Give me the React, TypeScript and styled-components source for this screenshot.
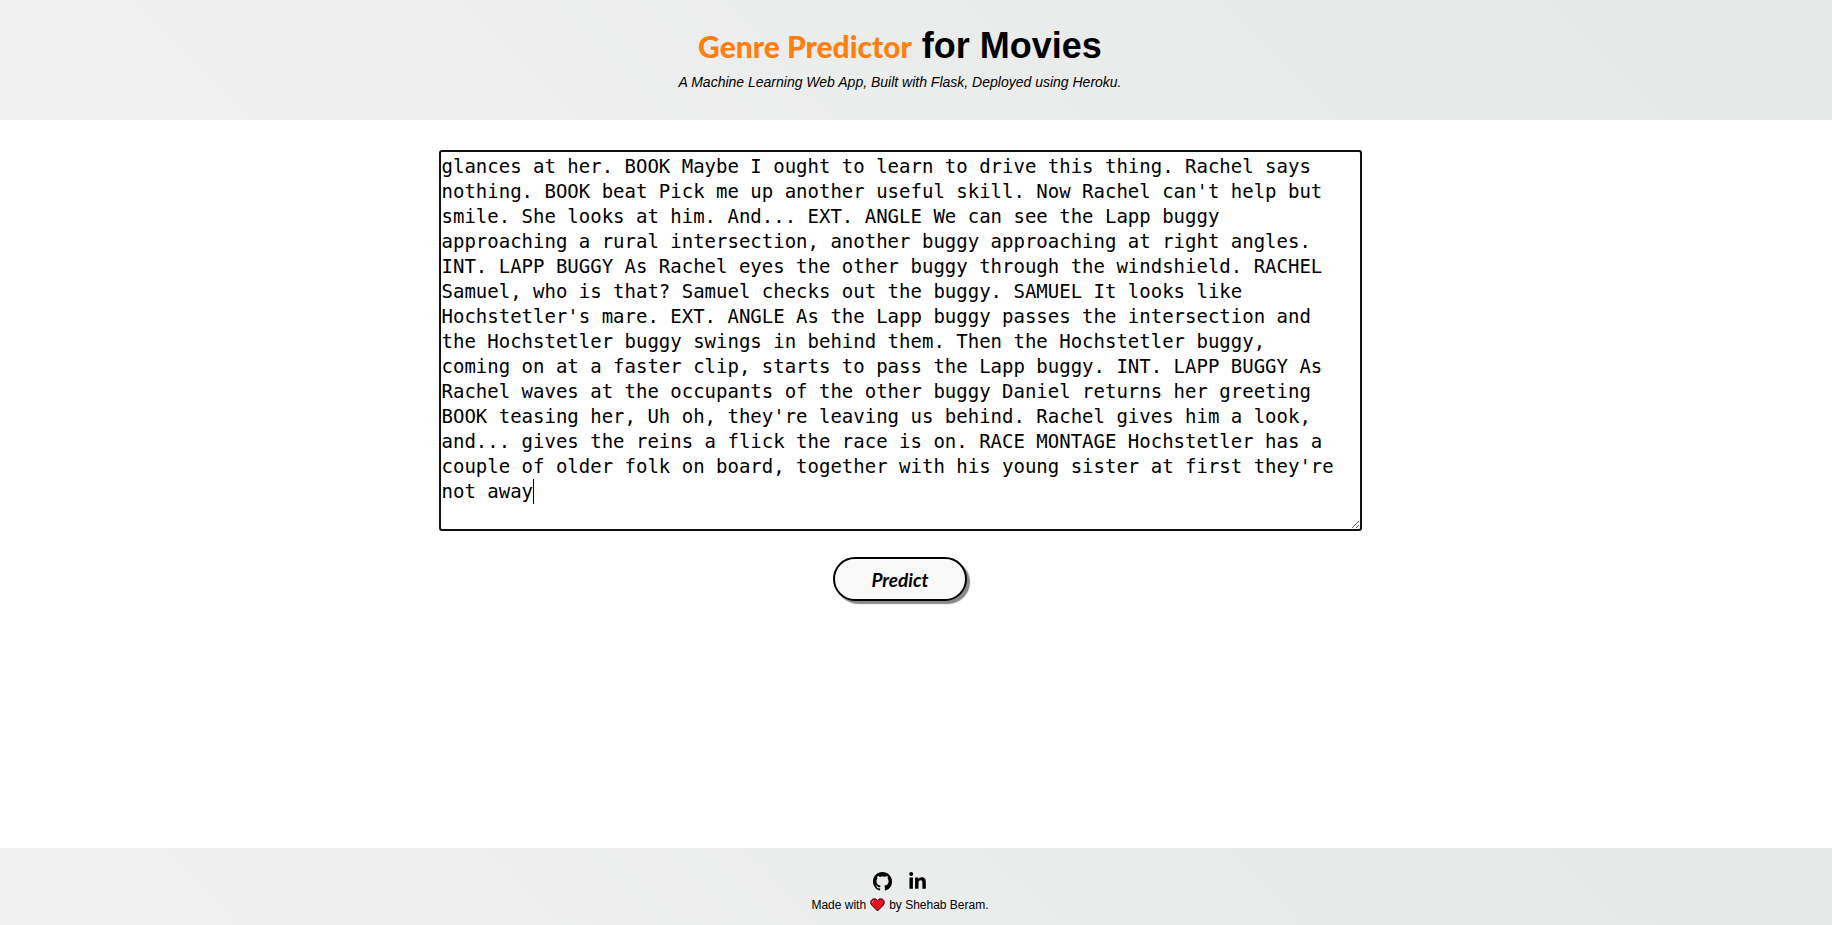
import React from "react";
import styled, { createGlobalStyle } from "styled-components";
import { FaLinkedinIn } from "react-icons/fa";

const GlobalStyle = createGlobalStyle`
  * { box-sizing: border-box; }
  body {
    margin: 0;
    background: #fff;
    color: #000;
    font-family: "Liberation Sans", Arial, sans-serif;
  }
`;

const Page = styled.div`
  display: flex;
  flex-direction: column;
  min-height: 100vh;
`;

const Band = styled.div`
  display: flex;
  flex-direction: column;
  align-items: center;
  padding-right: 32px;
  background: linear-gradient(45deg, #f1f1f1, #e5e8e7);
`;

const Header = styled(Band).attrs({ as: "header" })`
  padding-top: 24px;
  padding-bottom: 28px;
`;

const Title = styled.h1`
  margin: 0;
  font-size: 36px;
  line-height: 44px;
`;

const Brand = styled.span`
  color: #ff7f0e;
  font-family: Lato, sans-serif;
  font-size: 30px;
  font-weight: 900;
  line-height: 30px;
`;

const Tagline = styled.p`
  margin: 6px 0 2px;
  font-size: 14px;
  font-style: italic;
  line-height: 16px;
`;

const Form = styled.form`
  display: flex;
  flex: 1;
  flex-direction: column;
  align-items: center;
  gap: 26px;
  padding: 30px 32px 30px 0;
`;

const Editor = styled.div`
  position: relative;
  width: 100%;
  max-width: 923px;
  font-family: "DejaVu Sans Mono", monospace;
  font-size: 19px;
  line-height: 25px;
`;

const Script = styled.textarea`
  display: block;
  width: 100%;
  padding: 2px 1px 0;
  border: 2px solid #101010;
  border-radius: 3px;
  outline: none;
  overflow: hidden;
  background: #fff;
  color: #000;
  font: inherit;
`;

const Caret = styled.span`
  position: absolute;
  bottom: 27px;
  left: calc(8ch + 3px);
  width: 1px;
  height: 25px;
  background: #000;
`;

const PredictButton = styled.button`
  width: 134px;
  height: 44px;
  padding: 0;
  border: 2px solid #000;
  border-radius: 22px;
  background: #f9f9fa;
  box-shadow: 3px 3px 1px #888;
  color: #000;
  font-family: Lato, sans-serif;
  font-size: 19px;
  font-style: italic;
  font-weight: 700;
`;

const Footer = styled(Band).attrs({ as: "footer" })`
  gap: 6px;
  padding-top: 24px;
  padding-bottom: 12px;
`;

const Social = styled.nav`
  display: flex;
  gap: 16px;
`;

const SocialLink = styled.a`
  display: flex;
  color: #000;
`;

const Credit = styled.p`
  display: flex;
  align-items: center;
  gap: 4px;
  margin: 0;
  font-size: 12px;
  line-height: 16px;
`;

const SCRIPT_LINES = [
  "glances at her. BOOK Maybe I ought to learn to drive this thing. Rachel says",
  "nothing. BOOK beat Pick me up another useful skill. Now Rachel can't help but",
  "smile. She looks at him. And... EXT. ANGLE We can see the Lapp buggy",
  "approaching a rural intersection, another buggy approaching at right angles.",
  "INT. LAPP BUGGY As Rachel eyes the other buggy through the windshield. RACHEL",
  "Samuel, who is that? Samuel checks out the buggy. SAMUEL It looks like",
  "Hochstetler's mare. EXT. ANGLE As the Lapp buggy passes the intersection and",
  "the Hochstetler buggy swings in behind them. Then the Hochstetler buggy,",
  "coming on at a faster clip, starts to pass the Lapp buggy. INT. LAPP BUGGY As",
  "Rachel waves at the occupants of the other buggy Daniel returns her greeting",
  "BOOK teasing her, Uh oh, they're leaving us behind. Rachel gives him a look,",
  "and... gives the reins a flick the race is on. RACE MONTAGE Hochstetler has a",
  "couple of older folk on board, together with his young sister at first they're",
  "not away",
];

const GithubMark = () => (
  <svg width="19" height="19" viewBox="0 0 16 16" aria-hidden="true">
    <path
      fillRule="evenodd"
      d="M8 0C3.58 0 0 3.58 0 8c0 3.54 2.29 6.53 5.47 7.59.4.07.55-.17.55-.38 0-.19-.01-.82-.01-1.49-2.01.37-2.53-.49-2.69-.94-.09-.23-.48-.94-.82-1.13-.28-.15-.68-.52-.01-.53.63-.01 1.08.58 1.23.82.72 1.21 1.87.87 2.33.66.07-.52.28-.87.51-1.07-1.78-.2-3.64-.89-3.64-3.95 0-.87.31-1.59.82-2.15-.08-.2-.36-1.02.08-2.12 0 0 .67-.21 2.2.82.64-.18 1.32-.27 2-.27s1.36.09 2 .27c1.53-1.04 2.2-.82 2.2-.82.44 1.1.16 1.92.08 2.12.51.56.82 1.27.82 2.15 0 3.07-1.87 3.75-3.65 3.95.29.25.54.73.54 1.48 0 1.07-.01 1.93-.01 2.2 0 .21.15.46.55.38A8.01 8.01 0 0 0 16 8c0-4.42-3.58-8-8-8Z"
    />
  </svg>
);

const Heart = () => (
  <svg width="15" height="14" viewBox="0 0 15 14" role="img" aria-label="love">
    <path
      d="M7.5 13 1.8 7.2C.3 5.6.4 3 1.9 1.7c1.7-1.5 4.3-1.1 5.6.8 1.3-1.9 3.9-2.3 5.6-.8 1.5 1.3 1.6 3.9.1 5.5Z"
      fill="#e81123"
      stroke="#1a0a0a"
      strokeLinejoin="round"
    />
    <path d="M2.2 4.6c0-1 .7-1.9 1.7-2" fill="none" stroke="#f9707b" strokeLinecap="round" />
  </svg>
);

export default function App() {
  return (
    <Page>
      <GlobalStyle />
      <Header>
        <Title>
          <Brand>Genre Predictor</Brand> for Movies
        </Title>
        <Tagline>A Machine Learning Web App, Built with Flask, Deployed using Heroku.</Tagline>
      </Header>
      <Form onSubmit={(event) => event.preventDefault()}>
        <Editor>
          <Script
            name="script"
            aria-label="Movie script"
            rows={15}
            spellCheck={false}
            defaultValue={SCRIPT_LINES.join("\n")}
          />
          <Caret />
        </Editor>
        <PredictButton type="submit">Predict</PredictButton>
      </Form>
      <Footer>
        <Social>
          <SocialLink href="https://github.com" aria-label="GitHub">
            <GithubMark />
          </SocialLink>
          <SocialLink href="https://linkedin.com" aria-label="LinkedIn">
            <FaLinkedinIn size={19} />
          </SocialLink>
        </Social>
        <Credit>
          <span>Made with</span>
          <Heart />
          <span>by Shehab Beram.</span>
        </Credit>
      </Footer>
    </Page>
  );
}
